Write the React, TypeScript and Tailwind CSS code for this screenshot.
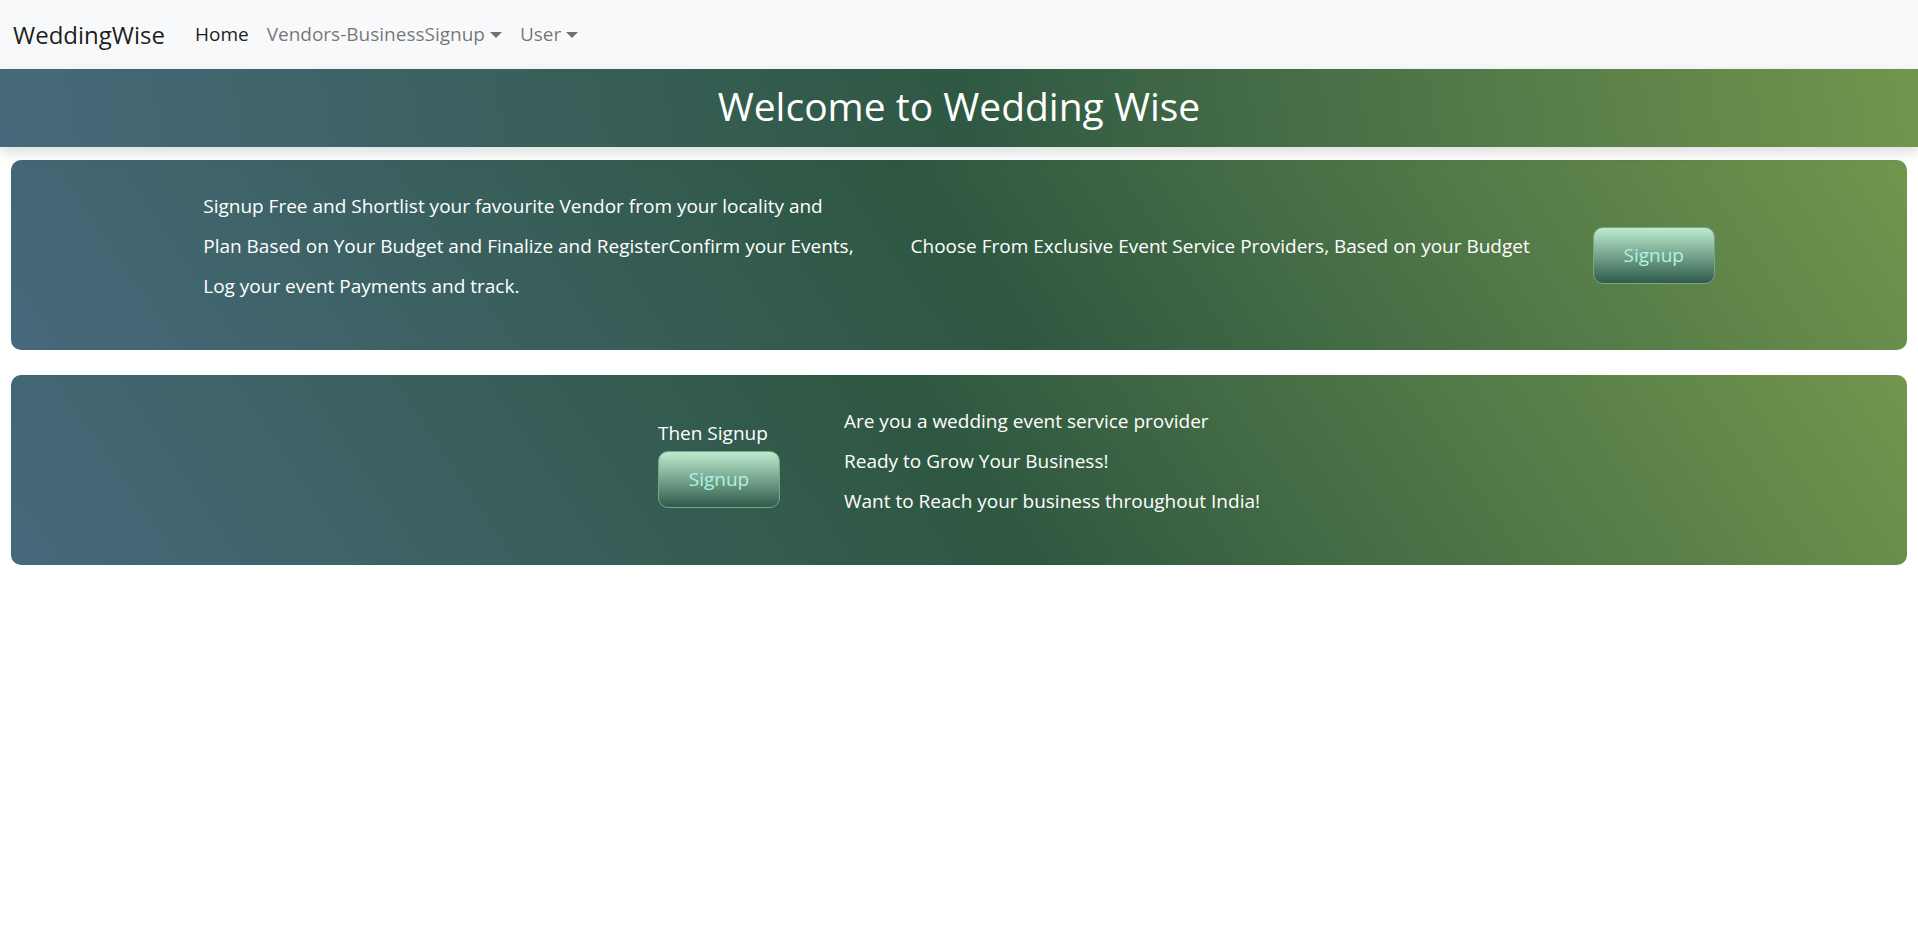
import React from "react";

function Caret() {
	return (
		<span className="ml-[5px] inline-block h-0 w-0 border-x-[6px] border-t-[6px] border-x-transparent border-t-current align-[3px]" />
	);
}

function SignupButton() {
	return (
		<button className="h-[57px] w-[122px] rounded-[10px] border border-[#7aa38a] bg-[linear-gradient(to_bottom,#bdebcf,#2f5c4b)] text-[19px] text-[#b0f2e3]">
			Signup
		</button>
	);
}

const card =
	"mx-[11px] h-[190px] rounded-[10px] bg-[linear-gradient(56deg,#46697c_0%,#2e5741_50%,#71964d_100%)] flex items-center justify-center text-white";

export default function App() {
	return (
		<div className="min-h-screen bg-white font-['Open_Sans',sans-serif] text-[19px]">
			<nav className="h-[69px] bg-[#f8f9fa] flex items-center pl-[13px]">
				<a href="#" className="mr-[21px] text-[24px] text-black/90">
					WeddingWise
				</a>
				<a href="#" className="px-[9px] text-black/90">
					Home
				</a>
				<a href="#" className="px-[9px] text-black/55">
					Vendors-BusinessSignup
					<Caret />
				</a>
				<a href="#" className="px-[9px] text-black/55">
					User
					<Caret />
				</a>
			</nav>

			<div className="relative z-10 h-[78px] flex items-center justify-center bg-[linear-gradient(80deg,#47697b_0%,#2f5843_50%,#71964d_100%)] shadow-[0_5px_12px_rgba(0,0,0,0.14)]">
				<h1 className="text-[39px] text-white font-normal pb-[3px]">Welcome to Wedding Wise</h1>
			</div>

			<div className={card + " mt-[13px]"}>
				<div className="pb-[18px] leading-[40px] whitespace-nowrap">
					<div>Signup Free and Shortlist your favourite Vendor from your locality and</div>
					<div>Plan Based on Your Budget and Finalize and RegisterConfirm your Events,</div>
					<div>Log your event Payments and track.</div>
				</div>
				<div className="ml-[57px] mr-[63px] pb-[18px] leading-[40px] whitespace-nowrap">
					Choose From Exclusive Event Service Providers, Based on your Budget
				</div>
				<SignupButton />
			</div>

			<div className={card + " mt-[25px] gap-[64px]"}>
				<div className="pb-[14px] flex flex-col items-start">
					<div className="leading-[30px]">Then Signup</div>
					<div className="mt-[3px]">
						<SignupButton />
					</div>
				</div>
				<div className="pb-[18px] leading-[40px] whitespace-nowrap">
					<div>Are you a wedding event service provider</div>
					<div>Ready to Grow Your Business!</div>
					<div>Want to Reach your business throughout India!</div>
				</div>
			</div>
		</div>
	);
}
